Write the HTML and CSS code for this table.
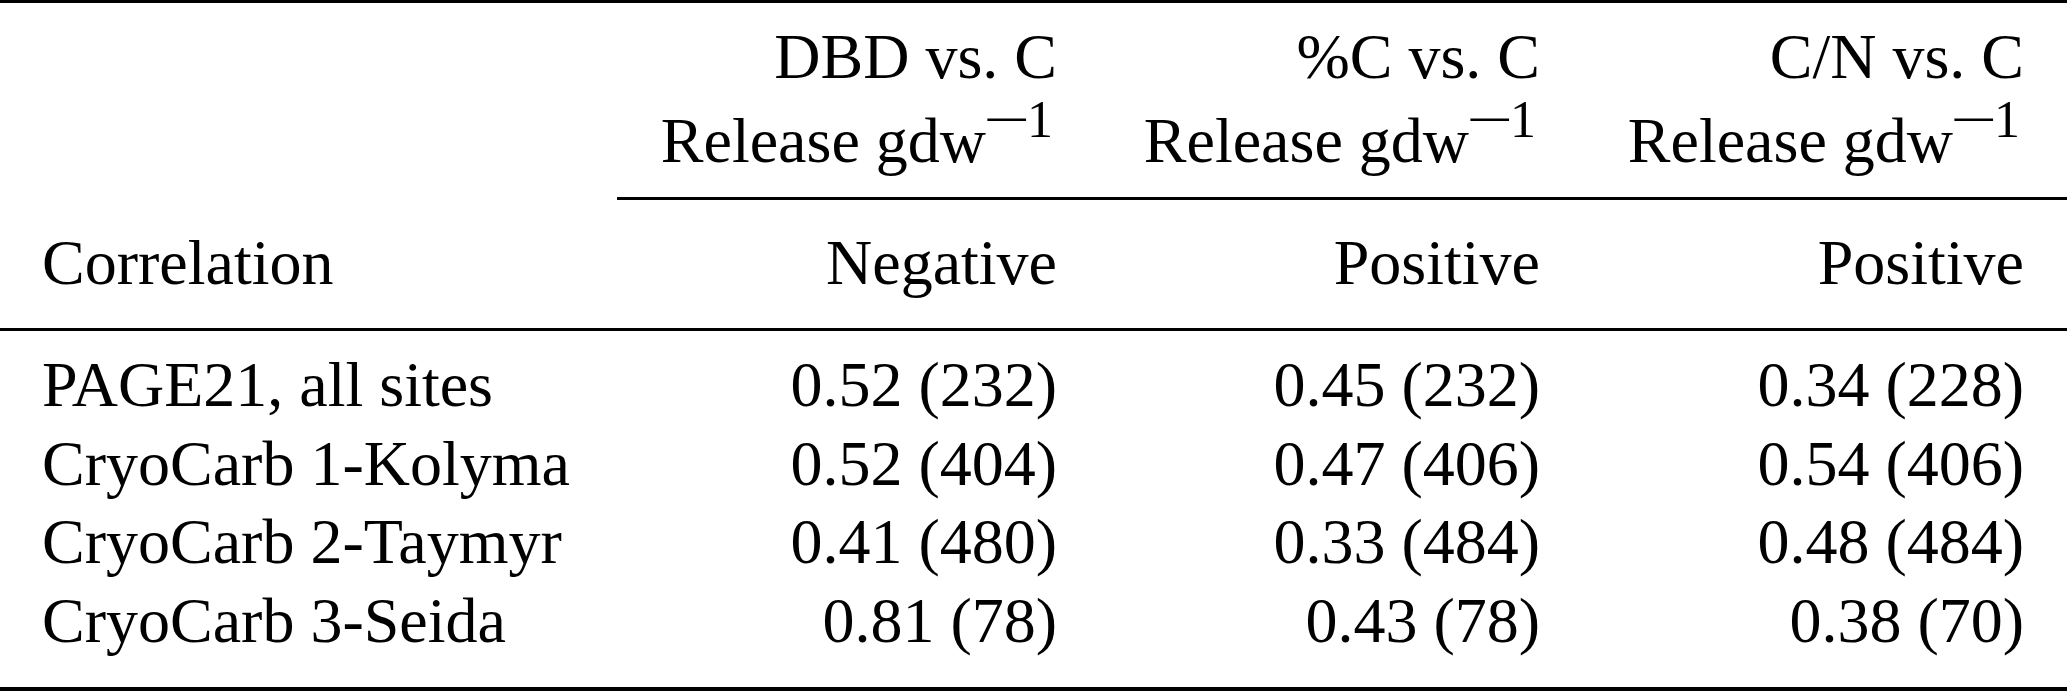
FILE: index.html
```html
<!DOCTYPE html>
<html lang="en">
<head>
<meta charset="utf-8">
<title>Correlation table</title>
<link rel="stylesheet" href="styles.css">
</head>
<body>
<table class="corr">
  <colgroup>
    <col class="c-lab">
    <col class="c-num">
    <col class="c-num">
    <col class="c-last">
  </colgroup>
  <thead>
    <tr class="hdr-top">
      <th class="lab"></th>
      <th class="num cm"><span class="ln">DBD vs. C</span><span class="ln">Release gdw<span class="sup"><span class="minus">−</span>1</span></span></th>
      <th class="num cm"><span class="ln">%C vs. C</span><span class="ln">Release gdw<span class="sup"><span class="minus">−</span>1</span></span></th>
      <th class="num cm"><span class="ln">C/N vs. C</span><span class="ln">Release gdw<span class="sup"><span class="minus">−</span>1</span></span></th>
    </tr>
    <tr class="hdr-sign">
      <th class="lab">Correlation</th>
      <th class="num">Negative</th>
      <th class="num">Positive</th>
      <th class="num">Positive</th>
    </tr>
  </thead>
  <tbody>
    <tr class="first">
      <td class="lab">PAGE21, all sites</td>
      <td class="num">0.52 (232)</td>
      <td class="num">0.45 (232)</td>
      <td class="num">0.34 (228)</td>
    </tr>
    <tr>
      <td class="lab">CryoCarb 1-Kolyma</td>
      <td class="num">0.52 (404)</td>
      <td class="num">0.47 (406)</td>
      <td class="num">0.54 (406)</td>
    </tr>
    <tr>
      <td class="lab">CryoCarb 2-Taymyr</td>
      <td class="num">0.41 (480)</td>
      <td class="num">0.33 (484)</td>
      <td class="num">0.48 (484)</td>
    </tr>
    <tr class="last">
      <td class="lab">CryoCarb 3-Seida</td>
      <td class="num">0.81 (78)</td>
      <td class="num">0.43 (78)</td>
      <td class="num">0.38 (70)</td>
    </tr>
  </tbody>
</table>
</body>
</html>
```

FILE: styles.css
```css
html, body {
  margin: 0;
  padding: 0;
  background: #ffffff;
}

body {
  width: 2067px;
  font-family: "Liberation Serif", "Times New Roman", serif;
  color: #000000;
}

.corr {
  width: 2067px;
  table-layout: fixed;
  border-collapse: separate;
  border-spacing: 0;
  border-top: 3px solid #000;
  border-bottom: 4px solid #000;
  font-size: 64px;
}

.c-lab { width: 617px; }
.c-num { width: 483px; }
.c-last { width: 484px; }

.corr th,
.corr td {
  padding: 0;
  font-weight: normal;
  vertical-align: top;
  white-space: nowrap;
  line-height: 78.67px;
}

.corr .lab {
  text-align: left;
  padding-left: 42px;
}

.corr .num {
  text-align: right;
  padding-right: 43px;
}

/* header: two stacked lines */
.hdr-top th {
  padding-top: 12px;
  padding-bottom: 14px;
  line-height: 84px;
}

.hdr-top .cm {
  border-bottom: 3px solid #000;
}

.ln {
  display: block;
}

.sup {
  font-size: 52px;
  line-height: 0;
  vertical-align: 25px;
  margin-right: 4px;
}

.minus {
  display: inline-block;
  width: 41px;
  text-align: center;
  transform: scaleX(1.6);
}

/* sign row, closed by the midrule */
.hdr-sign th {
  padding-top: 23px;
  padding-bottom: 26px;
  line-height: 79px;
  border-bottom: 3px solid #000;
}

tbody .first td {
  padding-top: 15px;
}

tbody .last td {
  padding-bottom: 26.33px;
}
```
